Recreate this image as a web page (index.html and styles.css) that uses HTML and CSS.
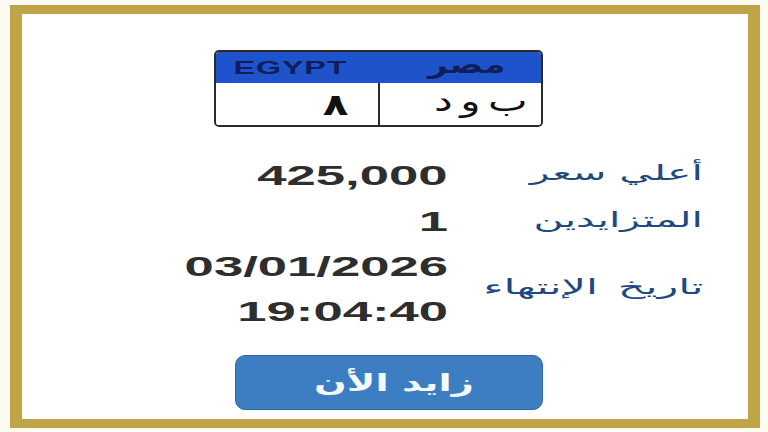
FILE: index.html
```html
<!DOCTYPE html>
<html lang="ar">
<head>
<meta charset="utf-8">
<title>لوحة مصر</title>
<link rel="stylesheet" href="styles.css">
</head>
<body>
<div class="frame">
  <div class="plate">
    <div class="plate-head">
      <div class="head-cell head-en"><span class="en-text">EGYPT</span></div>
      <div class="head-cell head-ar"><span class="ar-text" dir="rtl">مصر</span></div>
    </div>
    <div class="plate-body">
      <div class="body-cell num-cell"><span class="num-text">٨</span></div>
      <div class="body-cell let-cell"><span class="let-text" dir="rtl">ب و د</span></div>
    </div>
  </div>

  <div class="info">
    <div class="val row1"><span class="vtext">425,000</span></div>
    <div class="lab row1"><span class="ltext" dir="rtl">أعلي سعر</span></div>
    <div class="val row2"><span class="vtext">1</span></div>
    <div class="lab row2"><span class="ltext" dir="rtl">المتزايدين</span></div>
    <div class="val row3">
      <span class="vtext">03/01/2026</span>
      <span class="vtext">19:04:40</span>
    </div>
    <div class="lab row3"><span class="ltext wide" dir="rtl">تاريخ الإنتهاء</span></div>
  </div>

  <button class="bid-btn" type="button"><span class="btn-text" dir="rtl">زايد الأن</span></button>
</div>
</body>
</html>
```
FILE: styles.css
```css
html, body {
  margin: 0;
  padding: 0;
}
body {
  background: #fdfcf2;
  width: 768px;
  height: 432px;
  overflow: hidden;
}
.frame {
  margin: 5px 0 0 10px;
  width: 750px;
  height: 423px;
  box-sizing: border-box;
  border-style: solid;
  border-color: #c0a548;
  border-width: 9px 12px;
  background: #ffffff;
  display: flex;
  flex-direction: column;
  align-items: flex-start;
}

/* plate */
.plate {
  margin-top: 36px;
  margin-left: 192px;
  width: 329px;
  height: 77px;
  box-sizing: border-box;
  border: 2px solid #2b2b2b;
  border-radius: 5px;
  overflow: hidden;
  display: flex;
  flex-direction: column;
}
.plate-head {
  height: 31px;
  background: #1e53cc;
  display: flex;
}
.head-cell {
  flex: 1;
  display: flex;
  align-items: center;
  justify-content: center;
}
.head-en { padding-right: 8px; }
.head-ar { padding-left: 21px; }
.en-text {
  display: inline-block;
  font-family: "Liberation Sans", Arial, sans-serif;
  font-weight: bold;
  font-size: 19px;
  letter-spacing: 0.5px;
  color: #0f1f5a;
  transform: scaleX(1.7);
}
.ar-text {
  display: inline-block;
  font-family: "DejaVu Sans", sans-serif;
  font-weight: bold;
  font-size: 24px;
  color: #0f1f5a;
  transform: scaleX(1.45);
  line-height: 1;
  margin-top: -6px;
}
.plate-body {
  flex: 1;
  display: flex;
  background: #fff;
}
.body-cell {
  display: flex;
  align-items: center;
  justify-content: flex-end;
}
.num-cell {
  border-right: 2px solid #2b2b2b;
  padding-right: 30px;
  box-sizing: border-box;
  width: 164px;
}
.let-cell {
  flex: 1;
  padding-right: 13px;
}
.num-text {
  display: inline-block;
  font-family: "DejaVu Sans", sans-serif;
  font-weight: bold;
  font-size: 30px;
  color: #111;
  transform: scaleX(1.4);
  transform-origin: right center;
}
.let-text {
  display: inline-block;
  font-family: "DejaVu Sans", sans-serif;
  font-size: 29px;
  word-spacing: -4px;
  color: #111;
  transform: scaleX(1.45);
  transform-origin: right center;
  line-height: 1;
  margin-top: -6px;
}

/* info */
.info {
  margin-top: 25px;
  display: grid;
  grid-template-columns: 426px 255px;
  grid-template-rows: 48px 45px 90px;
}
.val {
  display: flex;
  flex-direction: column;
  align-items: flex-end;
  justify-content: center;
}
.vtext {
  display: block;
  font-family: "Liberation Sans", Arial, sans-serif;
  font-weight: bold;
  font-size: 27px;
  line-height: 45px;
  color: #2e2e2e;
  transform: scaleX(1.95);
  transform-origin: right center;
}
.lab {
  display: flex;
  align-items: center;
  justify-content: flex-end;
  padding-bottom: 6px;
}
.ltext {
  display: inline-block;
  font-family: "DejaVu Sans", sans-serif;
  font-size: 21px;
  color: #1f4a80;
  transform: scaleX(1.95);
  transform-origin: right center;
}
.ltext.wide {
  word-spacing: 3px;
  transform: scaleX(2.05);
}

/* button */
.bid-btn {
  margin-top: 20px;
  margin-left: 213px;
  width: 308px;
  height: 55px;
  padding: 0;
  border: 1px solid #2f67a6;
  border-radius: 10px;
  background: #3d7ec3;
  display: flex;
  align-items: center;
  justify-content: center;
  cursor: pointer;
}
.btn-text {
  display: inline-block;
  font-family: "DejaVu Sans", sans-serif;
  font-weight: bold;
  font-size: 24px;
  color: #f4f8ff;
  transform: scaleX(1.6);
  margin-left: 10px;
}
```
